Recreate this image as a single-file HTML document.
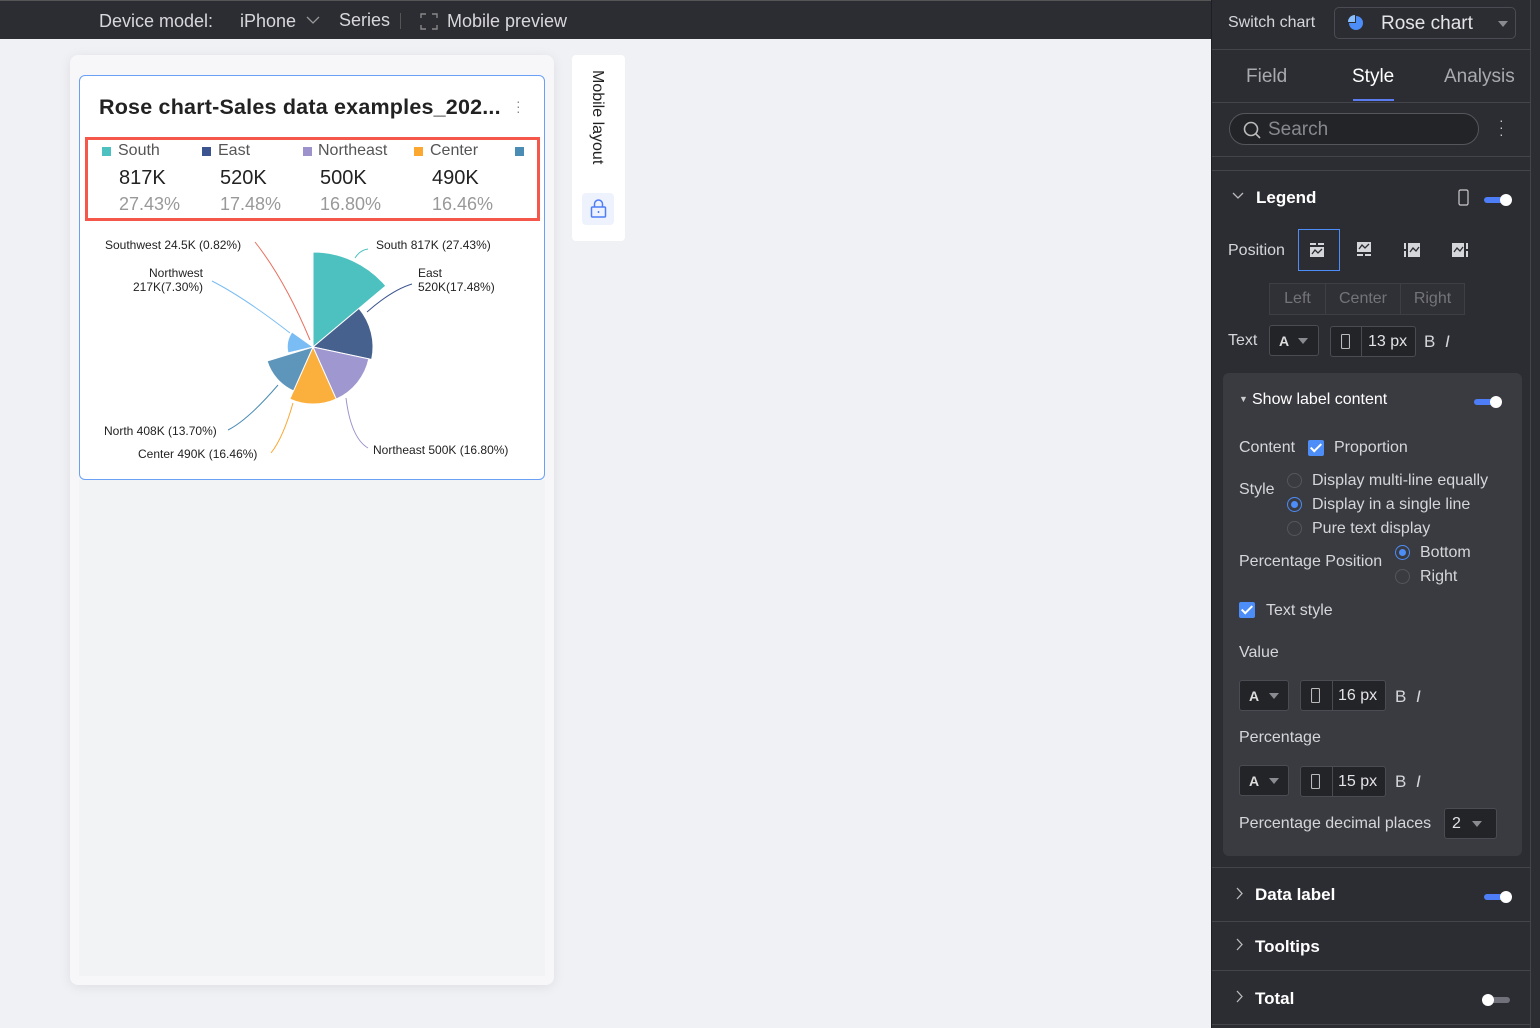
<!DOCTYPE html>
<html><head><meta charset="utf-8"><style>
*{box-sizing:border-box;margin:0;padding:0}
body{width:1540px;height:1028px;overflow:hidden;background:#f0f1f5;font-family:"Liberation Sans",sans-serif;position:relative}
.top{position:absolute;left:0;top:0;width:1211px;height:39px;background:#2c2d33;border-top:1px solid #555;color:#d8d8dc;font-size:18px}
.top span{position:absolute;top:10px}
.panel{position:absolute;left:1211px;top:0;width:329px;height:1028px;background:#2c2d33;border-left:1px solid #1e1f23;color:#d5d6da;font-size:16px}
.abs{position:absolute}
.hl{position:absolute;left:0;width:318px;height:1px;background:#44454b}
.sel{position:absolute;border:1px solid #4b4c53;border-radius:3px;background:#232428}
.tog{position:absolute;width:26px;height:6px;border-radius:3px;background:#4d7ef7}
.tog i{position:absolute;right:-2px;top:-3px;width:12px;height:12px;border-radius:50%;background:#fff}
.radio{position:absolute;width:15px;height:15px;border-radius:50%;border:1px solid #55565c}
.radio.on{border:1px solid #4d8df7}
.radio.on::after{content:"";position:absolute;left:3px;top:3px;width:7px;height:7px;border-radius:50%;background:#4d8df7}
.cb{position:absolute;width:16px;height:16px;border-radius:2px;background:#4d8df7}
.cb::after{content:"";position:absolute;left:5px;top:1px;width:4px;height:9px;border:solid #fff;border-width:0 2px 2px 0;transform:rotate(45deg)}
.b{color:#fff;font-weight:bold;font-size:17px}
.caret{position:absolute;width:0;height:0;border-left:5px solid transparent;border-right:5px solid transparent;border-top:6px solid #8a8b92}
</style></head><body>
<div class="top">
<span style="left:99px">Device model:</span>
<span style="left:240px">iPhone</span>
<svg class="abs" style="left:306px;top:14px" width="14" height="10"><path d="M1 2l6 6 6-6" stroke="#999" fill="none" stroke-width="1.3"/></svg>
<span style="left:339px;top:9px">Series</span>
<div class="abs" style="left:400px;top:12px;width:1px;height:16px;background:#555"></div>
<svg class="abs" style="left:420px;top:12px" width="18" height="17" fill="none" stroke="#888" stroke-width="1.4"><path d="M1 5V1h5M12 1h5v4M17 12v4h-5M6 16H1v-4"/></svg>
<span style="left:447px">Mobile preview</span>
</div>

<div class="abs" style="left:70px;top:55px;width:484px;height:930px;background:#f7f7f9;border-radius:8px;box-shadow:0 2px 12px rgba(0,0,0,.08)"></div>
<div class="abs" style="left:79px;top:75px;width:466px;height:405px;background:#fff;border:1.5px solid #6aa0f5;border-radius:6px"></div>
<div class="abs" style="left:79px;top:480px;width:466px;height:496px;background:#f2f3f5"></div>
<div class="abs" style="left:99px;top:95px;font-size:21.5px;font-weight:bold;color:#222;letter-spacing:.2px">Rose chart-Sales data examples_202...</div>
<div class="abs" style="left:516px;top:99px;color:#888;font-size:14px;line-height:5px">·<br>·<br>·</div>
<div class="abs" style="left:85px;top:137px;width:455px;height:84px;border:3px solid #f5574a"></div>
<div class="abs" style="font-size:16px;color:#555;top:142px;left:0">
<i class="abs" style="left:102px;top:5px;width:9px;height:9px;background:#4cc1c0"></i><span class="abs" style="left:118px">South</span>
<i class="abs" style="left:202px;top:5px;width:9px;height:9px;background:#3b5490"></i><span class="abs" style="left:218px">East</span>
<i class="abs" style="left:303px;top:5px;width:9px;height:9px;background:#9d92cc"></i><span class="abs" style="left:318px">Northeast</span>
<i class="abs" style="left:414px;top:5px;width:9px;height:9px;background:#fba730"></i><span class="abs" style="left:430px">Center</span>
<i class="abs" style="left:515px;top:5px;width:9px;height:9px;background:#4b8cb5"></i>
</div>
<div class="abs" style="font-size:20px;color:#222;top:167px;left:0">
<span class="abs" style="left:119px">817K</span><span class="abs" style="left:220px">520K</span><span class="abs" style="left:320px">500K</span><span class="abs" style="left:432px">490K</span></div>
<div class="abs" style="font-size:18px;color:#999;top:194px;left:0">
<span class="abs" style="left:119px">27.43%</span><span class="abs" style="left:220px">17.48%</span><span class="abs" style="left:320px">16.80%</span><span class="abs" style="left:432px">16.46%</span></div>
<svg class="abs" style="left:0;top:0" width="560" height="480" font-family="Liberation Sans" font-size="12" fill="#222">
<path d="M313 347L313 252A95 95 0 0 1 385.8 285.9Z" fill="#4cc1c0" stroke="#fff"/>
<path d="M313 347L359 308.4A60 60 0 0 1 371.7 359.5Z" fill="#47618f" stroke="#fff"/>
<path d="M313 347L368.8 358.9A57 57 0 0 1 336.2 399.1Z" fill="#9f97cf" stroke="#fff"/>
<path d="M313 347L336.2 399.1A57 57 0 0 1 289.8 399.1Z" fill="#fbaf3c" stroke="#fff"/>
<path d="M313 347L293.5 390.9A48 48 0 0 1 267.1 361Z" fill="#5e95ba" stroke="#fff"/>
<path d="M313 347L288 353A26 26 0 0 1 292 332Z" fill="#7abcf4" stroke="#fff"/>
<g fill="none" stroke-width="1">
<path d="M355 258q5-8 13-9" stroke="#4cc1c0"/>
<path d="M367 312q25-22 45-28" stroke="#3b5490"/>
<path d="M346 398q5 40 22 50" stroke="#9d92cc"/>
<path d="M293 403q-10 35-22 50" stroke="#fba730"/>
<path d="M278 385q-30 35-50 45" stroke="#4b8cb5"/>
<path d="M290 333q-45-35-78-52" stroke="#7abcf4"/>
<path d="M310 340q-25-60-55-98" stroke="#e8705e"/>
</g>
<text x="105" y="249">Southwest 24.5K (0.82%)</text>
<text x="376" y="249">South 817K (27.43%)</text>
<text x="149" y="277">Northwest</text><text x="133" y="291">217K(7.30%)</text>
<text x="418" y="277">East</text><text x="418" y="291">520K(17.48%)</text>
<text x="104" y="435">North 408K (13.70%)</text>
<text x="138" y="458">Center 490K (16.46%)</text>
<text x="373" y="454">Northeast 500K (16.80%)</text>
</svg>
<div class="abs" style="left:572px;top:55px;width:53px;height:186px;background:#fff;border-radius:4px"></div>
<div class="abs" style="left:588px;top:70px;writing-mode:vertical-rl;font-size:16px;color:#222">Mobile layout</div>
<div class="abs" style="left:582px;top:193px;width:32px;height:32px;background:#eef2fd;border-radius:4px"></div>
<svg class="abs" style="left:590px;top:199px" width="17" height="20" fill="none" stroke="#4d7ef7" stroke-width="1.5"><rect x="1.5" y="8" width="14" height="10" rx="1"/><path d="M4.5 8V5a4 4 0 0 1 8 0v3M8.5 12v2"/></svg>

<div class="panel">
<div class="abs" style="left:16px;top:14px">Switch chart</div>
<div class="sel" style="left:122px;top:7px;width:182px;height:32px;background:#2c2d33;border-radius:5px"></div>
<svg class="abs" style="left:136px;top:15px" width="16" height="16"><path d="M8 1A7 7 0 1 1 1 8L8 8Z" fill="#4d8df7"/><path d="M7 0v7H0A7 7 0 0 1 7 0Z" fill="#8ac0ff"/></svg>
<div class="abs" style="left:169px;top:13px;font-size:19px;color:#e5e5e8">Rose chart</div>
<div class="caret" style="left:286px;top:21px"></div>
<div class="hl" style="top:49px"></div>
<div class="abs" style="left:34px;top:66px;font-size:19px;color:#a9aab0">Field</div>
<div class="abs" style="left:140px;top:66px;font-size:19px;color:#fff">Style</div>
<div class="abs" style="left:232px;top:66px;font-size:19px;color:#a9aab0">Analysis</div>
<div class="abs" style="left:141px;top:99px;width:41px;height:2px;background:#5a7cf0"></div>
<div class="hl" style="top:102px"></div>
<div class="abs" style="left:17px;top:113px;width:250px;height:32px;border:1px solid #55565c;border-radius:16px;background:#232428"></div>
<svg class="abs" style="left:31px;top:121px" width="18" height="18" fill="none" stroke="#bbb" stroke-width="1.6"><circle cx="8" cy="8" r="6.5"/><path d="M13 13l4 4"/></svg>
<div class="abs" style="left:56px;top:119px;font-size:19px;color:#88898f">Search</div>
<div class="abs" style="left:287px;top:117px;color:#ccc;line-height:7px;font-size:14px">·<br>·<br>·</div>
<div class="hl" style="top:156px"></div><div class="hl" style="top:170px"></div>
<svg class="abs" style="left:20px;top:192px" width="12" height="8"><path d="M1 1l5 5 5-5" stroke="#bbb" fill="none" stroke-width="1.3"/></svg>
<div class="abs b" style="left:44px;top:188px">Legend</div>
<svg class="abs" style="left:246px;top:189px" width="11" height="17" fill="none" stroke="#ccc" stroke-width="1.2"><rect x="1" y="1" width="9" height="15" rx="1.5"/></svg>
<div class="tog" style="left:272px;top:197px"><i></i></div>
<div class="abs" style="left:16px;top:242px">Position</div>
<div class="abs" style="left:86px;top:229px;width:42px;height:42px;border:1.5px solid #4d8df7"></div>
<svg class="abs" style="left:97px;top:241px" width="180" height="18" fill="#d5d6da"><rect x="1" y="2" width="6" height="2"/><rect x="9" y="2" width="6" height="2"/><rect x="1" y="6" width="14" height="10"/><path d="M3 13l3-4 3 3 4-4" stroke="#2c2d33" fill="none" stroke-width="1.3"/>
<rect x="48" y="1" width="14" height="10"/><rect x="48" y="13" width="6" height="2"/><rect x="56" y="13" width="6" height="2"/><path d="M50 8l3-4 3 3 4-4" stroke="#2c2d33" fill="none" stroke-width="1.3"/>
<rect x="95" y="2" width="2" height="6"/><rect x="95" y="10" width="2" height="6"/><rect x="99" y="2" width="12" height="14"/><path d="M101 11l3-4 3 3 3-4" stroke="#2c2d33" fill="none" stroke-width="1.3"/>
<rect x="143" y="2" width="12" height="14"/><rect x="157" y="2" width="2" height="6"/><rect x="157" y="10" width="2" height="6"/><path d="M145 11l3-4 3 3 3-4" stroke="#2c2d33" fill="none" stroke-width="1.3"/></svg>
<div class="abs" style="left:57px;top:283px;width:196px;height:32px;border:1px solid #3e3f45;background:#303136;display:flex;color:#73747a;font-size:16px">
<div style="width:56px;text-align:center;line-height:30px;border-right:1px solid #3e3f45">Left</div>
<div style="width:75px;text-align:center;line-height:30px;border-right:1px solid #3e3f45">Center</div>
<div style="flex:1;text-align:center;line-height:30px">Right</div></div>
<div class="abs" style="left:16px;top:332px">Text</div>
<div class="sel" style="left:57px;top:325px;width:50px;height:31px"></div>
<div class="abs" style="left:67px;top:333px;font-weight:bold;font-size:14px;color:#ddd">A</div><div class="caret" style="left:86px;top:338px"></div>
<div class="sel" style="left:118px;top:326px;width:86px;height:31px"></div>
<div class="abs" style="left:149px;top:326px;width:1px;height:31px;background:#4b4c53"></div>
<svg class="abs" style="left:129px;top:334px" width="9" height="15" fill="none" stroke="#bbb" stroke-width="1.1"><rect x=".5" y=".5" width="8" height="14" rx="1"/></svg>
<div class="abs" style="left:156px;top:333px;color:#e3e3e6">13 px</div>
<div class="abs" style="left:212px;top:332px;font-size:17px">B</div><div class="abs" style="left:233px;top:332px;font-size:17px;font-style:italic">I</div>

<div class="abs" style="left:11px;top:373px;width:299px;height:483px;background:#3a3b41;border-radius:6px"></div>
<div class="abs" style="left:27px;top:394px;font-size:9px;color:#ccc">▼</div>
<div class="abs" style="left:40px;top:391px;color:#fff;font-size:16px">Show label content</div>
<div class="tog" style="left:262px;top:399px"><i></i></div>
<div class="abs" style="left:27px;top:439px">Content</div>
<div class="cb" style="left:96px;top:440px"></div>
<div class="abs" style="left:122px;top:439px">Proportion</div>
<div class="abs" style="left:27px;top:481px">Style</div>
<div class="radio" style="left:75px;top:473px"></div><div class="abs" style="left:100px;top:472px">Display multi-line equally</div>
<div class="radio on" style="left:75px;top:497px"></div><div class="abs" style="left:100px;top:496px">Display in a single line</div>
<div class="radio" style="left:75px;top:521px"></div><div class="abs" style="left:100px;top:520px">Pure text display</div>
<div class="abs" style="left:27px;top:553px">Percentage Position</div>
<div class="radio on" style="left:183px;top:545px"></div><div class="abs" style="left:208px;top:544px">Bottom</div>
<div class="radio" style="left:183px;top:569px"></div><div class="abs" style="left:208px;top:568px">Right</div>
<div class="cb" style="left:27px;top:602px"></div><div class="abs" style="left:54px;top:602px">Text style</div>
<div class="abs" style="left:27px;top:644px">Value</div>
<div class="sel" style="left:27px;top:680px;width:50px;height:31px"></div>
<div class="abs" style="left:37px;top:688px;font-weight:bold;font-size:14px;color:#ddd">A</div><div class="caret" style="left:57px;top:693px"></div>
<div class="sel" style="left:88px;top:680px;width:86px;height:31px"></div>
<div class="abs" style="left:120px;top:680px;width:1px;height:31px;background:#4b4c53"></div>
<svg class="abs" style="left:99px;top:688px" width="9" height="15" fill="none" stroke="#bbb" stroke-width="1.1"><rect x=".5" y=".5" width="8" height="14" rx="1"/></svg>
<div class="abs" style="left:126px;top:687px;color:#e3e3e6">16 px</div>
<div class="abs" style="left:183px;top:687px;font-size:17px">B</div><div class="abs" style="left:204px;top:687px;font-size:17px;font-style:italic">I</div>
<div class="abs" style="left:27px;top:729px">Percentage</div>
<div class="sel" style="left:27px;top:765px;width:50px;height:31px"></div>
<div class="abs" style="left:37px;top:773px;font-weight:bold;font-size:14px;color:#ddd">A</div><div class="caret" style="left:57px;top:778px"></div>
<div class="sel" style="left:88px;top:766px;width:86px;height:31px"></div>
<div class="abs" style="left:120px;top:766px;width:1px;height:31px;background:#4b4c53"></div>
<svg class="abs" style="left:99px;top:774px" width="9" height="15" fill="none" stroke="#bbb" stroke-width="1.1"><rect x=".5" y=".5" width="8" height="14" rx="1"/></svg>
<div class="abs" style="left:126px;top:773px;color:#e3e3e6">15 px</div>
<div class="abs" style="left:183px;top:772px;font-size:17px">B</div><div class="abs" style="left:204px;top:772px;font-size:17px;font-style:italic">I</div>
<div class="abs" style="left:27px;top:815px">Percentage decimal places</div>
<div class="sel" style="left:232px;top:808px;width:53px;height:31px"></div>
<div class="abs" style="left:240px;top:815px;color:#e3e3e6">2</div><div class="caret" style="left:260px;top:821px"></div>

<div class="hl" style="top:867px"></div>
<svg class="abs" style="left:24px;top:887px" width="8" height="13"><path d="M1 1l5 5.5-5 5.5" stroke="#bbb" fill="none" stroke-width="1.3"/></svg>
<div class="abs b" style="left:43px;top:885px">Data label</div>
<div class="tog" style="left:272px;top:894px"><i></i></div>
<div class="hl" style="top:921px"></div>
<svg class="abs" style="left:24px;top:938px" width="8" height="13"><path d="M1 1l5 5.5-5 5.5" stroke="#bbb" fill="none" stroke-width="1.3"/></svg>
<div class="abs b" style="left:43px;top:937px">Tooltips</div>
<div class="hl" style="top:970px"></div>
<svg class="abs" style="left:24px;top:990px" width="8" height="13"><path d="M1 1l5 5.5-5 5.5" stroke="#bbb" fill="none" stroke-width="1.3"/></svg>
<div class="abs b" style="left:43px;top:989px">Total</div>
<div class="tog" style="left:272px;top:997px;background:#70717a"><i style="left:-2px;right:auto"></i></div>
<div class="hl" style="top:1024px"></div>
<div class="abs" style="left:318px;top:0;width:1px;height:1028px;background:#44454b"></div>
</div>
</body></html>
